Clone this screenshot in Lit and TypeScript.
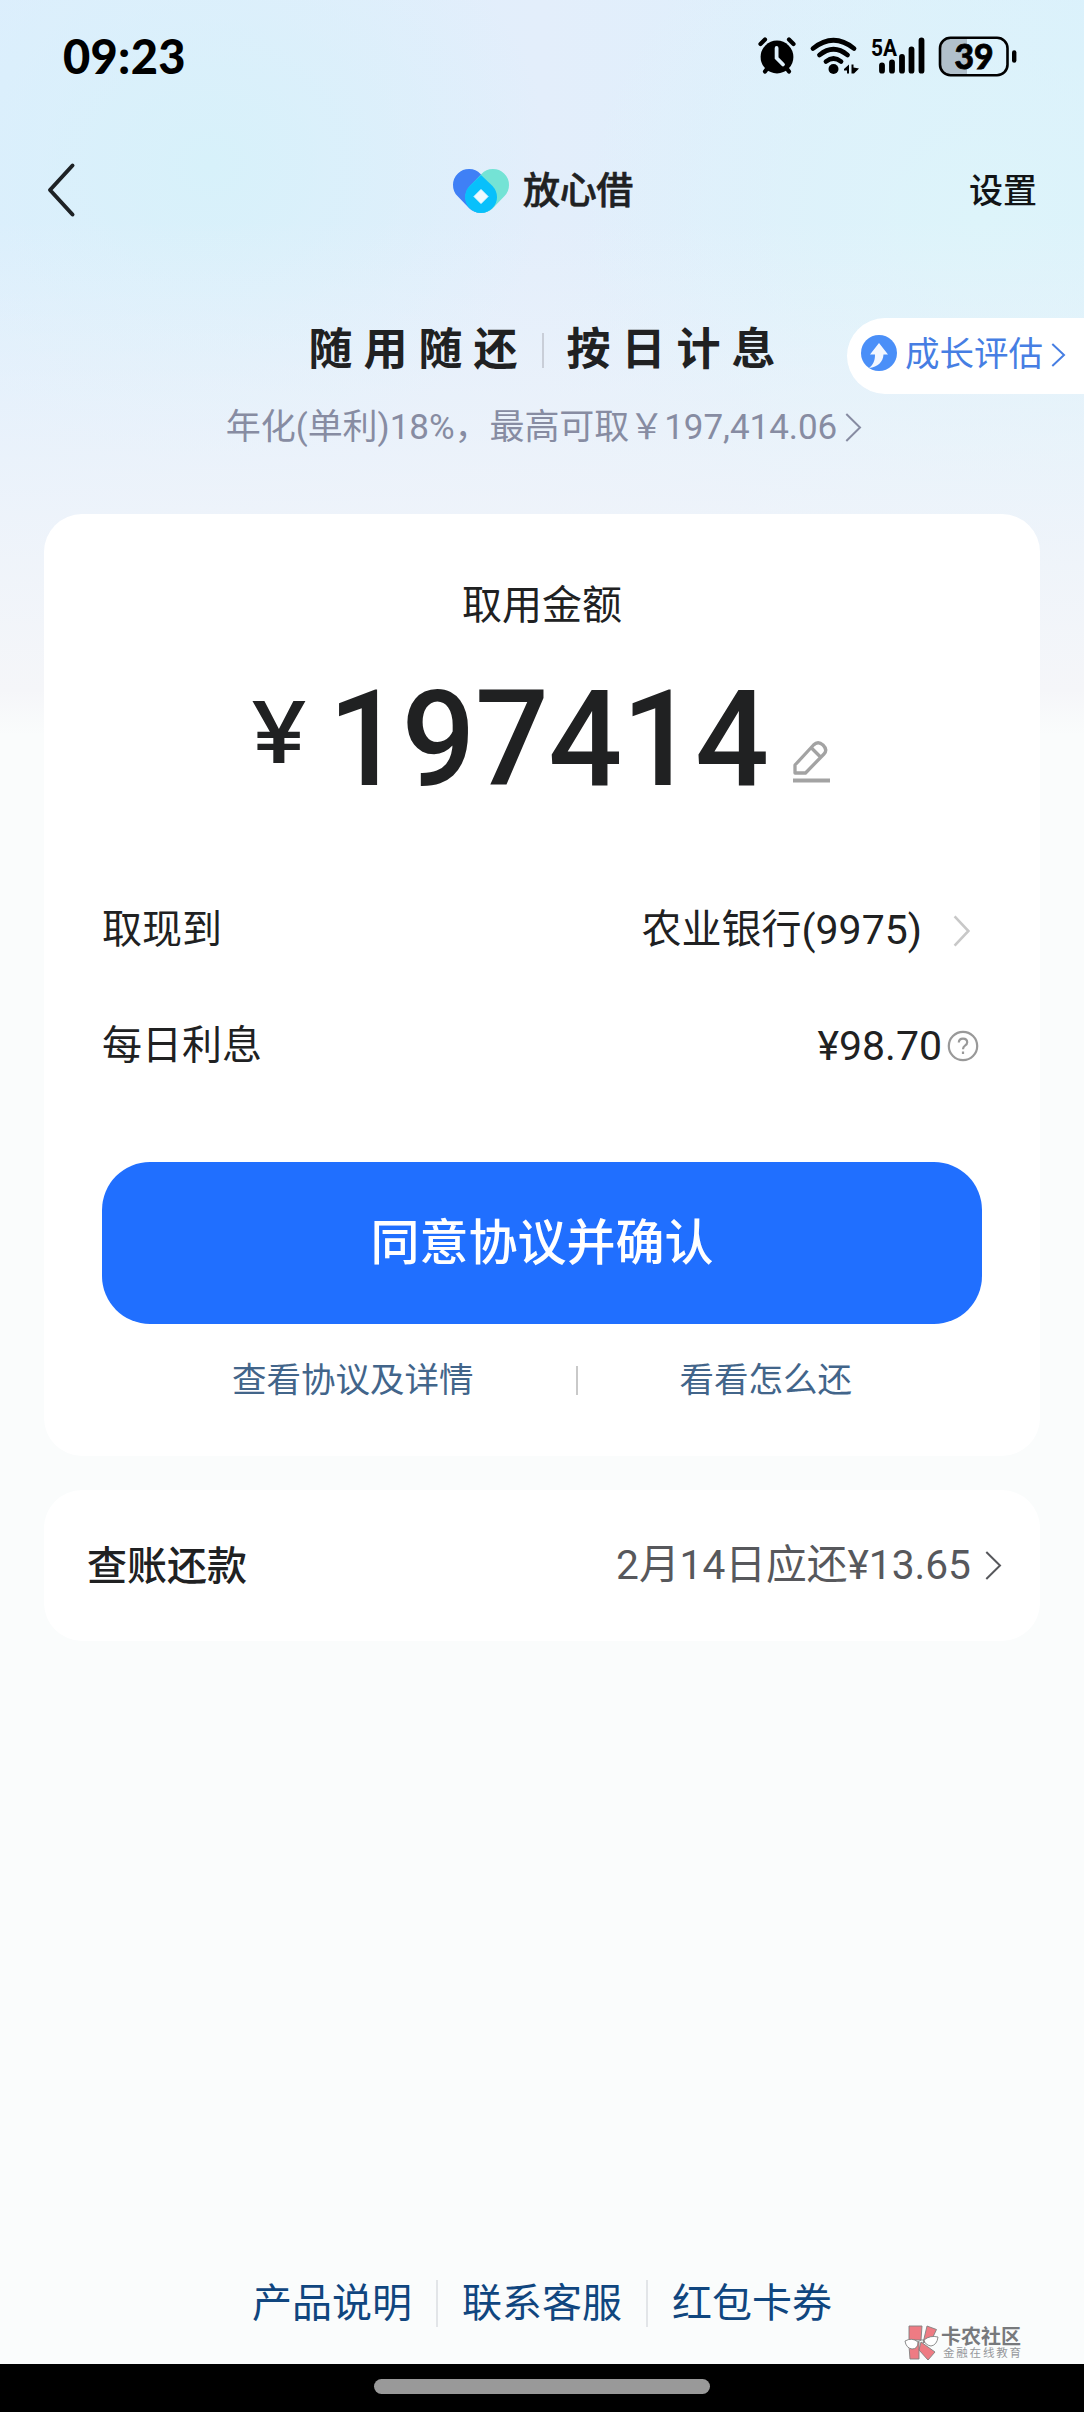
import { LitElement, html, css, svg } from "lit";
import { customElement } from "lit/decorators.js";

const chevron = (w: number, h: number, color: string, sw: number) => html`
  <svg class="chev" width=${w} height=${h} viewBox="0 0 ${w} ${h}" fill="none" stroke=${color} stroke-width=${sw}>
    <path d="M${sw / 2 + 0.3} ${sw / 2} L${w - sw} ${h / 2} L${sw / 2 + 0.3} ${h - sw / 2}" />
  </svg>`;

@customElement("app-root")
export class AppRoot extends LitElement {
  static styles = css`
    :host {
      display: block;
      font-family: Roboto, "Noto Sans CJK SC", sans-serif;
      color: #202122;
      line-height: 1;
    }
    * { box-sizing: border-box; }
    svg { display: block; flex: none; overflow: visible; }
    .page {
      height: 2412px;
      display: flex;
      flex-direction: column;
      white-space: nowrap;
      background:
        linear-gradient(to bottom, transparent 0 220px, rgba(240, 244, 250, 0.85) 520px, #f5f6f9 690px, #fafcfc 735px),
        radial-gradient(ellipse 340px 300px at 210px 165px, #d7f1fa, rgba(215, 241, 250, 0)),
        radial-gradient(ellipse 400px 360px at 980px 220px, #ddf4fa, rgba(221, 244, 250, 0)),
        linear-gradient(to right, #ddeefd, #e3eefb 50%, #daf0fc);
    }
    .status {
      height: 112px;
      display: flex;
      justify-content: space-between;
      padding: 0 67px 0 63px;
      align-items: center;
    }
    .time { font-family: Lato, sans-serif; font-size: 47px; font-weight: 900; letter-spacing: 0.3px; color: #000; }
    .nav {
      height: 156px;
      display: grid;
      grid-template-columns: 1fr auto 1fr;
      align-items: center;
      padding: 0 47px 0 48px;
    }
    .brand { display: flex; align-items: center; gap: 14px; font-size: 37px; font-weight: 500; letter-spacing: -0.3px; padding: 1px 0 0 1px; }
    .brand span { -webkit-text-stroke: 0.6px #202122; margin-top: 2px; }
    .settings { justify-self: end; font-size: 34px; font-weight: 500; color: #111416; margin-top: 2px; }
    .hero { height: 246px; display: grid; grid-template-columns: 1fr auto 1fr; grid-template-rows: 142px auto; }
    .slogan { grid-column: 2; display: flex; align-items: center; font-size: 44px; font-weight: 700; letter-spacing: 11px; padding: 22px 0 0 11px; }
    .slogan i { width: 2px; height: 35px; background: #c9ced8; margin: 0 23px 0 13px; }
    .growth {
      grid-column: 3;
      justify-self: end;
      align-self: start;
      margin-top: 50px;
      width: 237px;
      height: 76px;
      border-radius: 38px 0 0 38px;
      background: #fff;
      display: flex;
      align-items: center;
      padding: 0 0 6px 14px;
      font-size: 34.5px;
      color: #467ee3;
    }
    .growth span { margin: 2px 8px 0 8px; }
    .growth .chev { margin-top: 4px; }
    .rate { grid-column: 1 / -1; display: flex; justify-content: center; align-items: center; height: 34px; font-size: 35px; color: #878ca2; gap: 8px; padding-left: 4px; letter-spacing: -0.05px; }
    .card { margin: 0 44px; background: #fff; border-radius: 38px; flex: none; }
    .loan { height: 942px; padding: 0 58px; display: flex; flex-direction: column; }
    .label { margin-top: 72px; text-align: center; font-size: 40px; }
    .amount { height: 96px; margin-top: 66px; display: flex; align-items: center; padding-left: 149px; font-weight: 500; }
    .yen { font-family: Inter, sans-serif; font-size: 85px; width: 71px; margin-bottom: 16px; transform: scaleX(1.18); transform-origin: left; }
    .num { font-size: 134px; width: 447px; letter-spacing: -0.7px; transform: scaleX(0.972); }
    .pen { margin: 43px 0 0 24px; }
    .row { display: flex; align-items: center; justify-content: space-between; font-size: 40px; height: 40px; }
    .row > span { display: flex; align-items: center; }
    .bank { margin-top: 122px; padding-right: 11px; }
    .bank .chev { margin: 2px 0 0 31px; }
    .latin { font-size: 41px; }
    .interest { margin-top: 76px; padding-right: 3px; }
    .interest svg { margin-left: 5px; }
    .cta { height: 162px; margin-top: 96px; border-radius: 48px; background: #206fff; color: #fff; font-size: 49px; font-weight: 500; display: flex; align-items: center; justify-content: center; }
    .links { display: flex; align-items: center; font-size: 34.5px; color: #42658a; margin-top: 39px; padding-left: 130px; }
    .links i { width: 2px; height: 29px; background: #c9c9c9; margin: 0 102px; }
    .bill { height: 151px; margin-top: 34px; padding: 0 38px 0 43px; font-size: 40px; display: flex; align-items: center; justify-content: space-between; }
    .bill b { font-weight: 500; margin-top: 2px; }
    .due { display: flex; align-items: center; font-size: 40.7px; color: #57585c; gap: 14px; }
    .footer { margin-top: auto; height: 84px; display: flex; align-items: flex-start; justify-content: center; font-size: 40px; color: #10467f; position: relative; }
    .footer a { height: 47px; display: flex; align-items: center; padding: 0 24px; }
    .footer a + a { border-left: 2px solid #e2e5e8; }
    .mark { position: absolute; left: 904px; top: 45px; display: flex; gap: 2px; color: #77797c; }
    .mark b { display: block; font-size: 20px; font-weight: 700; margin-top: 2px; }
    .mark small { display: block; font-size: 11.5px; letter-spacing: 1.8px; margin: 1px 0 0 2px; color: #96989b; }
    .home { height: 48px; flex: none; background: #000; display: flex; justify-content: center; padding-top: 15px; }
    .home i { width: 336px; height: 15px; border-radius: 8px; background: #999; }
    .batt { font-family: Lato, sans-serif; }
  `;

  private statusIcons() {
    return svg`
      <circle cx="20" cy="21" r="16.400"/>
      <path d="M3.500 8 L8 3.500 M36.500 8 L32 3.500 M8 35.500 L11 31.500 M32 35.500 L29 31.500" fill="none" stroke="#000" stroke-width="4.200" stroke-linecap="round"/>
      <path d="M19.600 12 V22 L26 28.500" fill="none" stroke="#dff0fb" stroke-width="3.800" stroke-linecap="round"/>
      <g fill="none" stroke="#000" stroke-width="4.800" stroke-linecap="round">
        <path d="M56 12.500 Q76.500 -4 97 12.500"/>
        <path d="M62.500 19 Q76.500 7.500 90.500 19"/>
        <path d="M69 25.500 Q76.500 19.500 84 25.500"/>
      </g>
      <circle cx="76.500" cy="33" r="5"/>
      <path d="M87 33 L92 28.500 V37.500 H90 V34.500 H87 Z M94.500 28.500 H96.500 V31.500 L102 32.500 L97 37.500 H94.500 Z"/>
      <text x="114" y="19.500" font-size="24.500" font-weight="700" textLength="26" lengthAdjust="spacingAndGlyphs">5A</text>
      <path d="M125 29.300 V34.700 M135 26.300 V34.700 M145 21 V34.700 M154.500 13.300 V34.700 M164.500 4.300 V34.700" stroke="#000" stroke-width="5.800" stroke-linecap="round"/>
      <path d="M193 2 H210 V39 H193 Q183 39 183 29 V12 Q183 2 193 2Z" fill="#b1c0cb"/>
      <rect x="183" y="1.800" width="67.500" height="37.400" rx="10.500" fill="none" stroke="#000" stroke-width="2.600"/>
      <path d="M257.200 16.500 V24.500" stroke="#000" stroke-width="4.400" stroke-linecap="round"/>
      <text class="batt" x="197.500" y="33" font-size="34.500" font-weight="900" textLength="39" lengthAdjust="spacingAndGlyphs" stroke="#000" stroke-width="0.800">39</text>
    `;
  }

  render() {
    return html`<div class="page">
      <div class="status">
        <span class="time">09:23</span>
        <svg width="260" height="40" viewBox="0 0 260 40">${this.statusIcons()}</svg>
      </div>
      <div class="nav">
        <svg width="27" height="54" viewBox="0 0 27 54" fill="none" stroke="#1e2225" stroke-width="4" stroke-linecap="round" stroke-linejoin="round"><path d="M24.500 2.500 L2 27 L24.500 51.500"/></svg>
        <div class="brand">
          <svg width="56" height="44" viewBox="0 0 56 44">
            <path d="M16 16 L27.500 28" stroke="#3f80f6" stroke-width="32" stroke-linecap="round"/>
            <path d="M40 16 L28.500 28" stroke="#74e3d5" stroke-width="32" stroke-linecap="round"/>
            <path d="M28 6 L39.500 17 Q44 22 44 28 A16 16 0 0 1 12 28 Q12 22 16.500 17Z" fill="#08c0fb"/>
            <path d="M28 20.500 L35 27.500 L28 34.500 L21 27.500Z" fill="#eefaff" stroke="#eefaff" stroke-linejoin="round"/>
          </svg>
          <span>放心借</span>
        </div>
        <span class="settings">设置</span>
      </div>
      <div class="hero">
        <div class="slogan">随用随还<i></i>按日计息</div>
        <div class="growth">
          <svg width="36" height="36" viewBox="0 0 36 36"><circle cx="18" cy="18" r="18" fill="#4a8ff8"/><path d="M18 8 L27 19.500 H22.500 C22 27 17 32 8 33 C12 30 14 26 14 19.500 H9Z" fill="#f2f7ff"/></svg>
          <span>成长评估</span>${chevron(15, 24, "#467ee3", 2)}
        </div>
        <div class="rate">年化(单利)18%，最高可取￥197,414.06 ${chevron(17, 29, "#878ca2", 2)}</div>
      </div>
      <div class="card loan">
        <div class="label">取用金额</div>
        <div class="amount"><span class="yen">¥</span><span class="num">197414</span>
          <svg class="pen" width="38" height="42" viewBox="0 0 38 42" fill="none" stroke="#a3a3a3" stroke-width="3.300" stroke-linejoin="round"><path d="M2 32 V24 L20.500 4 Q25 -0.500 30 4 Q35 9 31 13 L12.500 32Z M18.500 7 L28 16.500"/><path d="M0 39.500 H37" stroke-width="3.800"/></svg>
        </div>
        <div class="row bank"><span>取现到</span><span>农业银行<span class="latin">(9975)</span> ${chevron(18, 32, "#c8c8c8", 2.6)}</span></div>
        <div class="row interest"><span>每日利息</span><span><span class="latin">¥98.70</span><svg width="32" height="32" viewBox="0 0 32 32" fill="none" stroke="#999" stroke-width="2.200"><circle cx="16" cy="16" r="14.200"/><path d="M11.800 12.500 Q12 8.700 16 8.700 Q20.200 8.700 20.200 12.300 Q20.200 14.300 18 15.600 Q16 16.800 16 19.300 M16 21.600 V24"/></svg></span></div>
        <div class="cta">同意协议并确认</div>
        <div class="links"><span>查看协议及详情</span><i></i><span>看看怎么还</span></div>
      </div>
      <div class="card bill"><b>查账还款</b><span class="due">2月14日应还¥13.65 ${chevron(17, 29, "#57585c", 2)}</span></div>
      <div class="footer">
        <a>产品说明</a><a>联系客服</a><a>红包卡券</a>
        <div class="mark">
          <svg width="35" height="36" viewBox="0 0 35 36" fill="#ee7b83" stroke="#808080" stroke-width="0.900" stroke-linejoin="round">
            <path d="M5 1 H18 L17 15 H5Z M23 1 L32.500 4.500 L28 14 L19 18Z M5 21 L15 17 V34 H6Z M17 17 L31 27 L24 35 L15 25Z"/>
            <path d="M1 16 Q8 12 14 17 Q14 24 8 24 Q2 23 1 16Z M20 15 Q26 10 34 12 Q33 20 27 21 Q21 20 20 15Z" fill="#fff"/>
            <path d="M14 17 Q17 14 20 15" fill="none"/>
          </svg>
          <div><b>卡农社区</b><small>金融在线教育</small></div>
        </div>
      </div>
      <div class="home"><i></i></div>
    </div>`;
  }
}
